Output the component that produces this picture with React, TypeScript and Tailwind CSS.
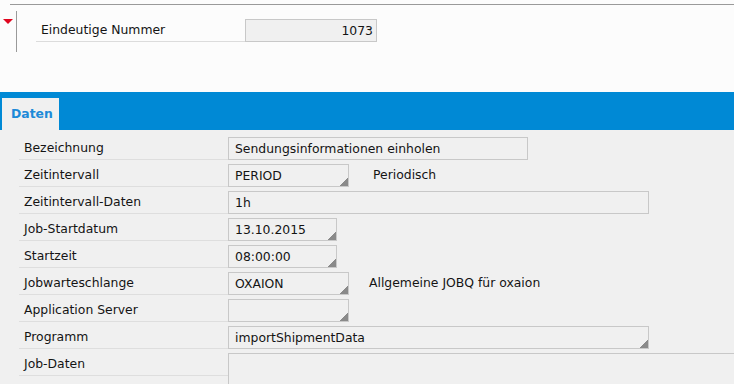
export default function App() {
  const rows = [
    { label: 'Bezeichnung', value: 'Sendungsinformationen einholen', width: 'w-[300px]', dropdown: false },
    { label: 'Zeitintervall', value: 'PERIOD', width: 'w-[121px]', dropdown: true, note: 'Periodisch', noteGap: 'ml-[24px]' },
    { label: 'Zeitintervall-Daten', value: '1h', width: 'w-[421px]', dropdown: false },
    { label: 'Job-Startdatum', value: '13.10.2015', width: 'w-[109px]', dropdown: true },
    { label: 'Startzeit', value: '08:00:00', width: 'w-[109px]', dropdown: true },
    { label: 'Jobwarteschlange', value: 'OXAION', width: 'w-[121px]', dropdown: true, note: 'Allgemeine JOBQ für oxaion', noteGap: 'ml-[20px]' },
    { label: 'Application Server', value: '', width: 'w-[121px]', dropdown: true },
    { label: 'Programm', value: 'importShipmentData', width: 'w-[421px]', dropdown: true },
  ];

  return (
    <div className="w-[734px] h-[384px] overflow-hidden bg-[#f0f0f0] text-[12.4px] text-[#141414] font-['DejaVu_Sans',sans-serif]">
      {/* Kopfbereich */}
      <div className="h-[92px] bg-[#fcfcfc] pt-[4px]">
        <div className="ml-[10px] border-t border-[#9a9a9a]" />
        <div className="flex mt-[6px]">
          <svg width="10" height="5" viewBox="0 0 10 5" className="ml-[3px] mt-[8px] shrink-0">
            <polygon points="0,0 10,0 5,5" fill="#e0061f" />
          </svg>
          <div className="ml-[3px] w-px h-[41px] bg-[#9a9a9a] shrink-0" />
          <div className="flex ml-[19px] mt-[8px] h-[23px]">
            <div className="w-[209px] shrink-0 h-[23px] border-b border-[#dcdcdc] pl-[5px] leading-[22px]">Eindeutige Nummer</div>
            <div className="w-[132px] shrink-0 h-[23px] border border-[#c8c8c8] bg-[#f0f0f0] text-right pr-[3px] leading-[21px]">1073</div>
          </div>
        </div>
      </div>

      {/* Reiterleiste */}
      <div className="h-[38px] bg-[#0089d5] flex items-end">
        <div className="ml-[2px] w-[57px] h-[32px] bg-[#f0f0f0] pl-[9px] pt-[8px] font-bold text-[#1d8ad8] leading-[16px]">Daten</div>
      </div>

      {/* Felder */}
      <div className="pt-[3px] pl-[19px]">
        {rows.map((row) => (
          <div key={row.label} className="flex h-[27px]">
            <div className="w-[209px] shrink-0 h-[27px] border-b border-[#dedede] pl-[5px] pt-[4px] leading-[22px]">{row.label}</div>
            <div className={`relative ${row.width} shrink-0 h-[23px] mt-[4px] border border-[#c8c8c8] pl-[6px] leading-[21px]`}>
              {row.value}
              {row.dropdown && (
                <svg width="9" height="9" viewBox="0 0 9 9" className="absolute right-0 bottom-0" shapeRendering="crispEdges">
                  <polygon points="9,0 9,9 0,9" fill="#8a8a8a" />
                </svg>
              )}
            </div>
            {row.note && <div className={`${row.noteGap} shrink-0 pt-[4px] leading-[22px]`}>{row.note}</div>}
          </div>
        ))}
        <div className="flex h-[40px]">
          <div className="w-[209px] shrink-0 h-[27px] border-b border-[#dedede] pl-[5px] pt-[4px] leading-[22px]">Job-Daten</div>
          <div className="w-[520px] h-[60px] mt-[4px] border border-[#c8c8c8] shrink-0" />
        </div>
      </div>
    </div>
  );
}
